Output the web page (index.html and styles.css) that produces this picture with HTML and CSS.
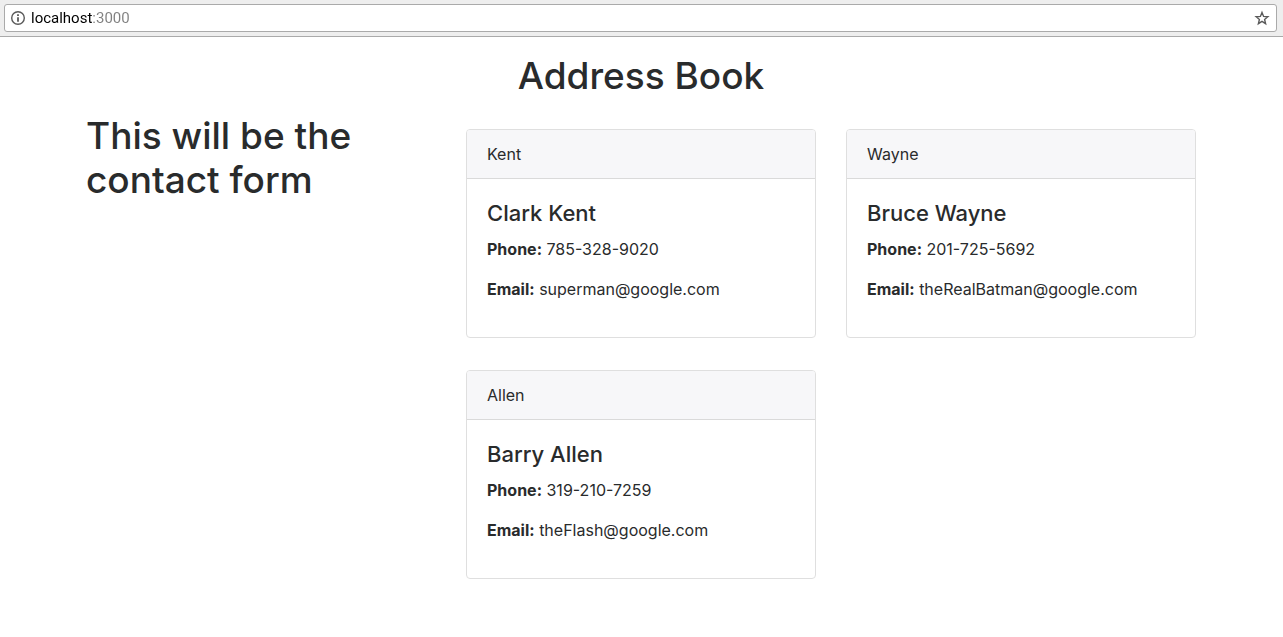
FILE: index.html
```html
<!DOCTYPE html>
<html lang="en">
<head>
  <meta charset="utf-8">
  <meta name="viewport" content="width=device-width, initial-scale=1">
  <title>Address Book</title>
  <link rel="stylesheet" href="styles.css">
</head>
<body>
  <header class="toolbar">
    <form class="omnibox">
      <button class="icon-button" type="button" aria-label="View site information">
        <svg width="16" height="16" viewBox="0 0 16 16" fill="none" aria-hidden="true">
          <circle cx="8" cy="8" r="6.3" stroke="#5a5a5a" stroke-width="1.4"/>
          <path d="M7.1 4.3h1.8v1.7H7.1zM7.1 7.2h1.8v4.5H7.1z" fill="#5a5a5a"/>
        </svg>
      </button>
      <input class="address" type="text" aria-label="Address" value="localhost:3000">
      <button class="icon-button" type="button" aria-label="Bookmark this page">
        <svg width="16" height="16" viewBox="0 0 16 16" fill="none" aria-hidden="true">
          <path d="M8 2.4l1.6 4 4.3.3-3.3 2.8 1 4.2L8 11.4l-3.6 2.3 1-4.2-3.3-2.8 4.3-.3z" stroke="#5a5a5a" stroke-width="1.4"/>
        </svg>
      </button>
    </form>
  </header>

  <main class="container">
    <h1 class="heading page-title">Address Book</h1>
    <div class="layout">
      <section class="form-column">
        <h1 class="heading">This will be the contact form</h1>
      </section>
      <section class="contacts">
        <article class="card">
          <div class="card-header">Kent</div>
          <div class="card-body">
            <h4 class="card-title">Clark Kent</h4>
            <p class="card-text"><strong>Phone:</strong> 785-328-9020</p>
            <p class="card-text"><strong>Email:</strong> superman@google.com</p>
          </div>
        </article>
        <article class="card">
          <div class="card-header">Wayne</div>
          <div class="card-body">
            <h4 class="card-title">Bruce Wayne</h4>
            <p class="card-text"><strong>Phone:</strong> 201-725-5692</p>
            <p class="card-text"><strong>Email:</strong> theRealBatman@google.com</p>
          </div>
        </article>
        <article class="card">
          <div class="card-header">Allen</div>
          <div class="card-body">
            <h4 class="card-title">Barry Allen</h4>
            <p class="card-text"><strong>Phone:</strong> 319-210-7259</p>
            <p class="card-text"><strong>Email:</strong> theFlash@google.com</p>
          </div>
        </article>
      </section>
    </div>
  </main>
</body>
</html>
```

FILE: styles.css
```css
*,
*::before,
*::after {
  box-sizing: border-box;
}

body {
  margin: 0;
  background: #fff;
  color: #292b2c;
  font-family: Inter, "Liberation Sans", sans-serif;
  font-size: 16px;
  line-height: 24px;
}

.toolbar {
  padding: 4px 6px 4px 4px;
  background: #eee;
  border-bottom: 1px solid #aaa;
}

.omnibox {
  display: flex;
  align-items: center;
  gap: 5px;
  height: 28px;
  padding: 0 6px 0 5px;
  background: #fff;
  border: 1px solid #aaa;
  border-radius: 3px;
}

.icon-button {
  display: flex;
  padding: 0;
  border: 0;
  background: none;
}

/* The host is black and the port after it is grey. */
.address {
  flex: 1;
  min-width: 0;
  height: 20px;
  padding: 0;
  border: 0;
  outline: 0;
  background: linear-gradient(90deg, #000 62px, #808080 62px);
  -webkit-background-clip: text;
  background-clip: text;
  color: transparent;
  font-family: Roboto, sans-serif;
  font-size: 15px;
}

.container {
  max-width: 1141px;
  margin: 0 auto;
  padding: 17px 16px 0 15px;
}

.heading {
  margin: 0;
  font-size: 37px;
  font-weight: 500;
  line-height: 44px;
}

.page-title {
  margin-bottom: 16px;
  text-align: center;
}

.layout {
  display: grid;
  grid-template-columns: repeat(3, 1fr);
  column-gap: 30px;
}

.form-column {
  padding-right: 20px;
}

.contacts {
  grid-column: span 2;
  display: grid;
  grid-template-columns: 1fr 1fr;
  gap: 32px 30px;
  padding-top: 15px;
}

.card {
  border: 1px solid #dfdfdf;
  border-radius: 4px;
  overflow: hidden;
}

.card-header {
  padding: 12px 20px;
  background: #f7f7f9;
  border-bottom: 1px solid #dadada;
}

.card-body {
  padding: 20px;
}

.card-title {
  margin: 0 0 10px;
  font-size: 22px;
  font-weight: 500;
  line-height: 28px;
}

.card-text {
  margin: 0 0 16px;
}
```
